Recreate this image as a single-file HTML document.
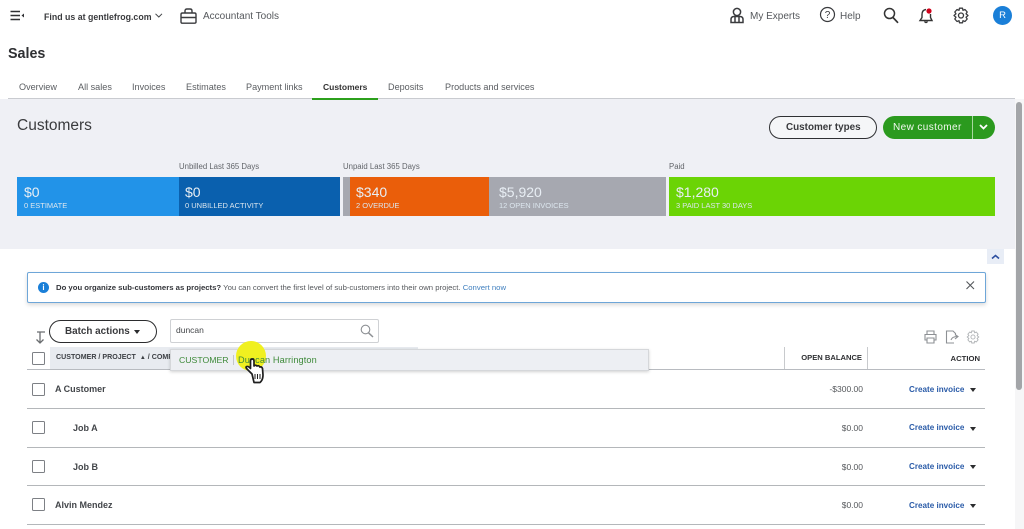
<!DOCTYPE html>
<html><head><meta charset="utf-8"><style>
html,body{margin:0;padding:0;width:1024px;height:529px;overflow:hidden;background:#fff}
body{position:relative;font-family:"Liberation Sans",sans-serif;color:#393a3d}
.t{position:absolute;white-space:nowrap;line-height:1}
.b{position:absolute}
.tile{position:absolute;top:177px;height:39px;color:#fff}
.tile .a{position:absolute;left:7px;top:8px;font-size:14px;line-height:1;white-space:nowrap;color:#e8eef4}
.tile .c{position:absolute;left:7px;top:25px;font-size:7.5px;line-height:1;white-space:nowrap;color:#dce6ee}
.cb{position:absolute;left:32px;width:11px;height:11px;border:1px solid #7d8085;border-radius:1.5px;background:#fff}
.ln{position:absolute;left:27px;width:958px;height:1px;background:#b4b7ba}
.tab{position:absolute;top:83px;font-size:9.1px;line-height:1;color:#5a5d61;white-space:nowrap}
svg{position:absolute;overflow:visible}
.ci{position:absolute;left:909px;font-size:8.1px;font-weight:bold;color:#2a5ba8;line-height:1;white-space:nowrap}
.ar{position:absolute;left:970px;width:0;height:0;border-left:3.5px solid transparent;border-right:3.5px solid transparent;border-top:4px solid #2b2c2e}
.am{position:absolute;right:161px;font-size:8.5px;color:#55585c;line-height:1;white-space:nowrap}
.nm{position:absolute;font-size:9px;font-weight:bold;color:#43464a;line-height:1;white-space:nowrap}
</style></head><body>

<!-- top bar -->
<svg style="left:10px;top:10px" width="16" height="12"><path d="M0.5 1.5H10M0.5 5.5H10M0.5 9.5H10" stroke="#2f3033" stroke-width="1.4"/><path d="M14 3.5L11.5 5.5L14 7.5Z" fill="#2f3033"/></svg>
<div class="t" style="left:44px;top:13px;font-size:8.800px;font-weight:bold;color:#3a3b3e">Find us at gentlefrog.com</div>
<svg style="left:155px;top:13px" width="8" height="6"><path d="M0.500 0.800L3.800 4L7 0.800" fill="none" stroke="#44474a" stroke-width="1"/></svg>
<svg style="left:180px;top:8px" width="17" height="16"><path d="M1 6.500Q1 5 2.500 5H14.500Q16 5 16 6.500V14Q16 15.200 14.500 15.200H2.500Q1 15.200 1 14ZM5 5V3Q5 1 7 1H10Q12 1 12 3V5M1 9.500H16" fill="none" stroke="#3a3b3e" stroke-width="1.400"/></svg>
<div class="t" style="left:203px;top:12px;font-size:10px;color:#55585c">Accountant Tools</div>

<svg style="left:730px;top:7px" width="14" height="17"><circle cx="7" cy="5" r="3.600" fill="none" stroke="#3a3b3e" stroke-width="1.500"/><path d="M1 15.500V12.500Q1 9.500 4 9.500H10Q13 9.500 13 12.500V15.500ZM5 9.500V15M9 9.500V15" fill="none" stroke="#3a3b3e" stroke-width="1.500"/></svg>
<div class="t" style="left:750px;top:12px;font-size:10px;color:#55585c">My Experts</div>
<svg style="left:820px;top:7px" width="16" height="16"><circle cx="7.500" cy="7.500" r="7" fill="none" stroke="#3a3b3e" stroke-width="1.200"/><text x="7.500" y="11" font-size="10" font-family="Liberation Sans" text-anchor="middle" fill="#3a3b3e">?</text></svg>
<div class="t" style="left:840px;top:12px;font-size:10px;color:#55585c">Help</div>
<svg style="left:883px;top:7px" width="16" height="17"><circle cx="6.500" cy="6.500" r="5" fill="none" stroke="#333" stroke-width="1.500"/><path d="M10 10.500L15 15.800" stroke="#333" stroke-width="1.700"/></svg>
<svg style="left:919px;top:7px" width="15" height="17"><path d="M7 2.500Q3 3 3 7.500V10.500L1 13.500H13L11.500 10.500V7M5.500 14.500Q7 16.500 8.500 14.500" fill="none" stroke="#333" stroke-width="1.400"/><circle cx="10" cy="4" r="2.600" fill="#d0021b"/></svg>
<svg style="left:953px;top:7px" width="16" height="17" viewBox="0 0 16 17"><path d="M6.500 1.200H9.500L10 3.300L12 2.500L14.200 5L13 6.800L15 8.500L13 10.200L14.200 12L12 14.500L10 13.700L9.500 15.800H6.500L6 13.700L4 14.500L1.800 12L3 10.200L1 8.500L3 6.800L1.800 5L4 2.500L6 3.300Z" fill="none" stroke="#3a3b3e" stroke-width="1.300" stroke-linejoin="round"/><circle cx="8" cy="8.500" r="2.500" fill="none" stroke="#3a3b3e" stroke-width="1.300"/></svg>
<div class="b" style="left:993px;top:6px;width:19px;height:19px;border-radius:50%;background:#1a7fd8"></div>
<div class="t" style="left:993px;top:11px;width:19px;text-align:center;font-size:9.500px;color:#fff">R</div>

<!-- heading and tabs -->
<div class="t" style="left:8px;top:47px;font-size:14.300px;font-weight:bold;color:#2f3033">Sales</div>
<div class="tab" style="left:19px">Overview</div>
<div class="tab" style="left:78px">All sales</div>
<div class="tab" style="left:132px">Invoices</div>
<div class="tab" style="left:186px">Estimates</div>
<div class="tab" style="left:246px">Payment links</div>
<div class="tab" style="left:323px;font-weight:bold;color:#333;font-size:8.500px;top:83px">Customers</div>
<div class="tab" style="left:388px">Deposits</div>
<div class="tab" style="left:445px">Products and services</div>

<!-- grey panel -->
<div class="b" style="left:0;top:99px;width:1015px;height:150px;background:#eff0f5"></div>
<div class="b" style="left:8px;top:98px;width:1007px;height:1px;background:#c9cbd0"></div>
<div class="b" style="left:312px;top:98px;width:66px;height:2px;background:#2ca01c"></div>
<div class="t" style="left:17px;top:118px;font-size:15.500px;color:#3a3b3e">Customers</div>

<div class="b" style="left:769px;top:116px;width:106px;height:21px;border:1.300px solid #2f3033;border-radius:12px;background:#f5f6f8"></div>
<div class="t" style="left:786px;top:123px;font-size:9.900px;font-weight:bold;color:#393a3d">Customer types</div>
<div class="b" style="left:883px;top:116px;width:112px;height:23px;border-radius:12px;background:#2b9a1e"></div>
<div class="b" style="left:972px;top:116px;width:1px;height:23px;background:#a8d8a0"></div>
<div class="t" style="left:893px;top:123px;font-size:10px;color:#f2f8f0;letter-spacing:.4px">New customer</div>
<svg style="left:979px;top:124px" width="10" height="7"><path d="M1 1L4.500 4.500L8 1" fill="none" stroke="#fff" stroke-width="1.800"/></svg>

<!-- money bar -->
<div class="t" style="left:179px;top:163px;font-size:7.800px;color:#62656a">Unbilled Last 365 Days</div>
<div class="t" style="left:343px;top:163px;font-size:7.800px;color:#62656a">Unpaid Last 365 Days</div>
<div class="t" style="left:669px;top:163px;font-size:7.800px;color:#62656a">Paid</div>

<div class="tile" style="left:17px;width:162px;background:#2293e8"><div class="a">$0</div><div class="c">0 ESTIMATE</div></div>
<div class="tile" style="left:179px;width:161px;background:#0a60ae"><div class="a" style="left:6px">$0</div><div class="c" style="left:6px">0 UNBILLED ACTIVITY</div></div>
<div class="b" style="left:343px;top:177px;width:7px;height:39px;background:#a6a8b0"></div>
<div class="tile" style="left:350px;width:139px;background:#ea5e0a"><div class="a" style="left:6px">$340</div><div class="c" style="left:6px">2 OVERDUE</div></div>
<div class="tile" style="left:489px;width:177px;background:#a6a8b0"><div class="a" style="left:10px">$5,920</div><div class="c" style="left:10px">12 OPEN INVOICES</div></div>
<div class="tile" style="left:669px;width:326px;background:#6bd405"><div class="a" style="left:7px">$1,280</div><div class="c" style="left:7px">3 PAID LAST 30 DAYS</div></div>

<!-- collapse -->
<div class="b" style="left:987px;top:249px;width:17px;height:15px;background:#e8edf6"></div>
<svg style="left:991px;top:254px" width="9" height="6"><path d="M1 4.500L4.500 1.500L8 4.500" fill="none" stroke="#2d4fa0" stroke-width="1.600"/></svg>

<!-- info banner -->
<div class="b" style="left:27px;top:272px;width:957px;height:29px;border:1px solid #6ea6d8;border-radius:2px;background:#fff;box-shadow:0 2px 4px rgba(0,0,0,.15)"></div>
<div class="b" style="left:38px;top:282px;width:11px;height:11px;border-radius:50%;background:#1a7fd8"></div>
<div class="t" style="left:38px;top:283.500px;width:11px;text-align:center;font-size:8px;font-weight:bold;color:#fff">i</div>
<div class="t" style="left:56px;top:283.500px;font-size:7.730px;color:#55585c"><b style="color:#33353a">Do you organize sub-customers as projects?</b> You can convert the first level of sub-customers into their own project. <span style="color:#3f7fbf">Convert now</span></div>
<svg style="left:966px;top:281px" width="9" height="9"><path d="M.5 .5L8 8M8 .5L.5 8" stroke="#55585c" stroke-width="1.100"/></svg>

<!-- toolbar -->
<svg style="left:34px;top:331px" width="12" height="13"><path d="M3 1H11M6 1V12M2.500 8.500L6 12L9.500 8.500" fill="none" stroke="#6a6d70" stroke-width="1.300"/></svg>
<div class="b" style="left:49px;top:320px;width:106px;height:21px;border:1.300px solid #2b2c2e;border-radius:12px;background:#fff"></div>
<div class="t" style="left:65px;top:326.500px;font-size:9.900px;font-weight:bold;color:#393a3d">Batch actions</div>
<div class="b" style="left:134px;top:330px;width:0;height:0;border-left:3.500px solid transparent;border-right:3.500px solid transparent;border-top:4.500px solid #2b2c2e"></div>
<div class="b" style="left:170px;top:319px;width:207px;height:22px;border:1px solid #cfd1d4;border-radius:2px;background:#fff"></div>
<div class="t" style="left:176px;top:326px;font-size:8.500px;color:#44474a">duncan</div>
<svg style="left:360px;top:324px" width="14" height="14"><circle cx="5.500" cy="5.500" r="4.300" fill="none" stroke="#8d9094" stroke-width="1.100"/><path d="M8.500 8.800L13 13" stroke="#8d9094" stroke-width="1.500"/></svg>

<svg style="left:924px;top:330px" width="13" height="14"><path d="M3 4.500V1H10V4.500M3 10H1V4.500H12V10H10M3 8H10V13H3Z" fill="none" stroke="#8d9094" stroke-width="1.100"/></svg>
<svg style="left:945px;top:330px" width="14" height="14"><path d="M9 13H1.500V1H8L10.500 3.500V5.500M6 10Q7 6.500 12.500 6.500M10 4.500L13 6.500L10 9" fill="none" stroke="#8d9094" stroke-width="1.100"/></svg>
<svg style="left:966px;top:330px" width="14" height="14" viewBox="0 0 16 17"><path d="M6.500 1.200H9.500L10 3.300L12 2.500L14.200 5L13 6.800L15 8.500L13 10.200L14.200 12L12 14.500L10 13.700L9.500 15.800H6.500L6 13.700L4 14.500L1.800 12L3 10.200L1 8.500L3 6.800L1.800 5L4 2.500L6 3.300Z" fill="none" stroke="#b0b3b6" stroke-width="1.100"/><circle cx="8" cy="8.500" r="2.500" fill="none" stroke="#b0b3b6" stroke-width="1.100"/></svg>

<!-- table head -->
<div class="b" style="left:50px;top:347px;width:368px;height:22px;background:#e8ebf0"></div>
<div class="cb" style="top:352px"></div>
<div class="t" style="left:56px;top:353.500px;font-size:7.100px;font-weight:bold;color:#3d4045">CUSTOMER / PROJECT &nbsp;<span style="font-size:6px">▲</span> / COMPANY</div>
<div class="b" style="left:784px;top:347px;width:1px;height:22px;background:#c8cacd"></div>
<div class="b" style="left:867px;top:347px;width:1px;height:22px;background:#c8cacd"></div>
<div class="t" style="right:162px;top:354px;font-size:7.600px;font-weight:bold;color:#2f3033">OPEN BALANCE</div>
<div class="t" style="right:44px;top:354.500px;font-size:7.700px;font-weight:bold;color:#2f3033">ACTION</div>
<div class="ln" style="top:369px;height:1px;background:#b8bbc0"></div>

<!-- rows -->
<div class="cb" style="top:383px"></div>
<div class="nm" style="left:55px;top:385px">A Customer</div>
<div class="am" style="top:385px;right:161px">-$300.00</div>
<div class="ci" style="top:386px">Create invoice</div><div class="ar" style="top:388px"></div>
<div class="ln" style="top:408px"></div>

<div class="cb" style="top:421px"></div>
<div class="nm" style="left:73px;top:424px">Job A</div>
<div class="am" style="top:424px">$0.00</div>
<div class="ci" style="top:424px">Create invoice</div><div class="ar" style="top:426.500px"></div>
<div class="ln" style="top:447px"></div>

<div class="cb" style="top:460px"></div>
<div class="nm" style="left:73px;top:463px">Job B</div>
<div class="am" style="top:462.500px">$0.00</div>
<div class="ci" style="top:463px">Create invoice</div><div class="ar" style="top:465px"></div>
<div class="ln" style="top:485px"></div>

<div class="cb" style="top:498px"></div>
<div class="nm" style="left:55px;top:501px">Alvin Mendez</div>
<div class="am" style="top:501px">$0.00</div>
<div class="ci" style="top:501.500px">Create invoice</div><div class="ar" style="top:504px"></div>
<div class="ln" style="top:524px"></div>

<!-- dropdown -->
<div class="b" style="left:170px;top:349px;width:479px;height:22px;background:#edeff3;border:1px solid #d5d7da;box-sizing:border-box;box-shadow:0 1px 3px rgba(0,0,0,.18)"></div>
<div class="t" style="left:179px;top:355.500px;font-size:8.700px;color:#3e8a3a">CUSTOMER</div>
<div class="b" style="left:233px;top:355px;width:1px;height:10px;background:#c3c6c9"></div>
<div class="b" style="left:236px;top:341px;width:30px;height:30px;border-radius:50%;background:#f0f020"></div>
<div class="t" style="left:238px;top:355.500px;font-size:9.200px;color:#3e8a3a;letter-spacing:.1px">Duncan Harrington</div>
<svg style="left:244px;top:358px" width="24" height="26" viewBox="0 0 24 26"><path d="M8 16L3 11Q1 9 3 8.500Q4.500 8 6.500 10.500V3Q6.500 1 8.200 1Q10 1 10 3V8Q11.500 6.500 13 8Q14.800 7 15.800 9Q17.800 8.500 18.500 10.500L19 17Q19 22 16 24.500H10Q9 20 8 16Z" fill="#fff" stroke="#1f1f1f" stroke-width="1.700" stroke-linejoin="round"/><path d="M11 16V21M13.500 16V21M16 16V21" stroke="#1f1f1f" stroke-width="1"/></svg>

<!-- scrollbar -->
<div class="b" style="left:1015px;top:99px;width:9px;height:430px;background:#f6f6f7"></div>
<div class="b" style="left:1016px;top:102px;width:6px;height:288px;border-radius:3px;background:#a3a5a8"></div>
</body></html>
